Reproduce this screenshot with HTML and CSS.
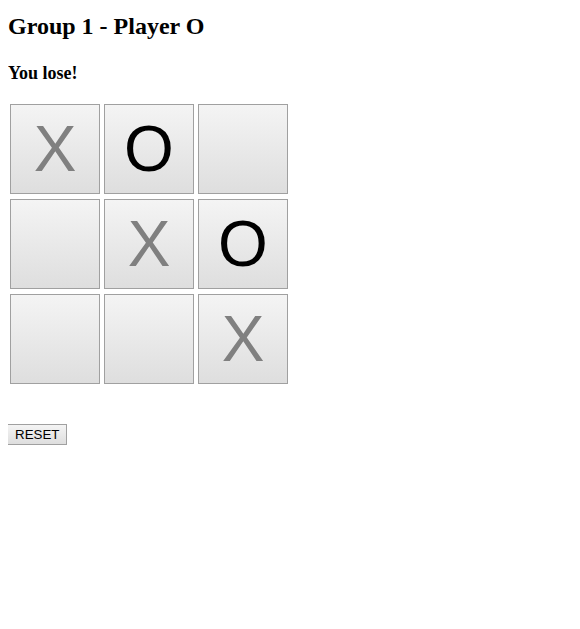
FILE: index.html
```html
<!DOCTYPE html>
<html>
<head>
<meta charset="utf-8">
<link rel="stylesheet" href="styles.css">
</head>
<body>
<h2 class="title">Group 1 - Player O</h2>
<h4 class="status">You lose!</h4>
<div class="board">
  <button class="cell x">X</button>
  <button class="cell o">O</button>
  <button class="cell"></button>
  <button class="cell"></button>
  <button class="cell x">X</button>
  <button class="cell o">O</button>
  <button class="cell"></button>
  <button class="cell"></button>
  <button class="cell x">X</button>
</div>
<button class="reset">RESET</button>
</body>
</html>
```
FILE: styles.css
```css
html, body {
  background: #fff;
}
body {
  margin: 0 8px 8px 8px;
  padding-top: 13px;
  font-family: "Liberation Serif", "Times New Roman", serif;
  color: #000;
}
.title {
  font-size: 24px;
  font-weight: bold;
  margin: 0;
}
.status {
  font-size: 18px;
  font-weight: bold;
  margin: 23px 0 0 0;
}
.board {
  display: grid;
  grid-template-columns: repeat(3, 90px);
  grid-auto-rows: 90px;
  column-gap: 4px;
  row-gap: 5px;
  margin: 20px 0 0 2px;
  width: max-content;
}
.cell {
  width: 90px;
  height: 90px;
  padding: 0;
  margin: 0;
  border: 1px solid #a0a0a0;
  border-radius: 0;
  background: linear-gradient(#f4f4f4, #dedede);
  font-family: "Liberation Sans", Arial, sans-serif;
  font-size: 64px;
  line-height: 88px;
  color: #000;
}
.cell.x {
  color: #808080;
}
.reset {
  display: block;
  margin: 40px 0 0 -1px;
  padding: 1px 7px;
  height: 21px;
  font-family: "Liberation Sans", Arial, sans-serif;
  font-size: 13.33px;
  color: #000;
  background: linear-gradient(#f4f4f4, #dedede);
  border: 1px solid #a0a0a0;
  border-radius: 0;
}
```
